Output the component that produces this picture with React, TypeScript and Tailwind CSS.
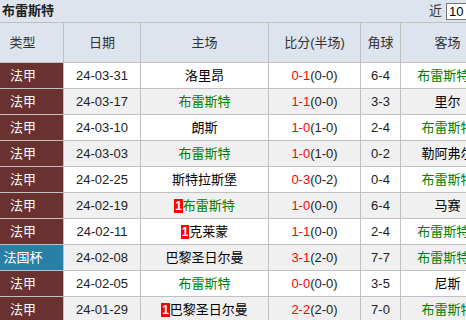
import React from 'react';

type Match = {
  league: string;
  cup?: boolean;
  date: string;
  home: string;
  homeRed?: number;
  homeOurs?: boolean;
  score: string;
  half: string;
  corner: string;
  away: string;
  awayRed?: number;
  awayOurs?: boolean;
};

const MATCHES: Match[] = [
  { league: '法甲', date: '24-03-31', home: '洛里昂', score: '0-1', half: '(0-0)', corner: '6-4', away: '布雷斯特', awayOurs: true, awayRed: 1 },
  { league: '法甲', date: '24-03-17', home: '布雷斯特', homeOurs: true, score: '1-1', half: '(0-0)', corner: '3-3', away: '里尔' },
  { league: '法甲', date: '24-03-10', home: '朗斯', score: '1-0', half: '(1-0)', corner: '2-4', away: '布雷斯特', awayOurs: true },
  { league: '法甲', date: '24-03-03', home: '布雷斯特', homeOurs: true, score: '1-0', half: '(1-0)', corner: '0-2', away: '勒阿弗尔' },
  { league: '法甲', date: '24-02-25', home: '斯特拉斯堡', score: '0-3', half: '(0-2)', corner: '0-4', away: '布雷斯特', awayOurs: true },
  { league: '法甲', date: '24-02-19', home: '布雷斯特', homeOurs: true, homeRed: 1, score: '1-0', half: '(0-0)', corner: '6-4', away: '马赛' },
  { league: '法甲', date: '24-02-11', home: '克莱蒙', homeRed: 1, score: '1-1', half: '(0-0)', corner: '2-4', away: '布雷斯特', awayOurs: true, awayRed: 1 },
  { league: '法国杯', cup: true, date: '24-02-08', home: '巴黎圣日尔曼', score: '3-1', half: '(2-0)', corner: '7-7', away: '布雷斯特', awayOurs: true, awayRed: 1 },
  { league: '法甲', date: '24-02-05', home: '布雷斯特', homeOurs: true, score: '0-0', half: '(0-0)', corner: '3-5', away: '尼斯' },
  { league: '法甲', date: '24-01-29', home: '巴黎圣日尔曼', homeRed: 1, score: '2-2', half: '(2-0)', corner: '7-0', away: '布雷斯特', awayOurs: true },
];

const RedCard = ({ n }: { n: number }) => (
  <span className="inline-block bg-[#ff0000] text-white font-bold leading-[14px] px-[1px] text-[12px]">{n}</span>
);

const Team = ({ name, ours, red, after }: { name: string; ours?: boolean; red?: number; after?: boolean }) => (
  <span className="whitespace-nowrap">
    {red && !after ? <RedCard n={red} /> : null}
    <span className={ours ? 'text-[#008000]' : 'text-black'}>{name}</span>
    {red && after ? <RedCard n={red} /> : null}
  </span>
);

export default function App() {
  return (
    <div
      className="w-[466px] h-[320px] overflow-hidden bg-white text-[13px] text-[#333]"
      style={{ fontFamily: '"Liberation Sans", "Noto Sans CJK SC", sans-serif' }}
    >
      <div className="h-[23px] bg-[#dde4ed] border-b border-[#c0c0c0] flex items-center justify-between pl-[2px]">
        <span className="font-bold text-[#222]">布雷斯特</span>
        <div className="flex items-center gap-[4px] -mr-[10px]">
          <span className="text-[#333]">近</span>
          <div className="w-[30px] h-[17px] border border-[#767676] bg-white pl-[2px] leading-[15px] text-black">10</div>
        </div>
      </div>
      <div className="w-[520px]">
        <div className="h-[40px] bg-[#dde4ed] border-b border-[#c0c0c0] flex text-[#333]">
          <div className="w-[64px] border-r border-[#c0c0c0] flex items-center justify-center pr-[18px]">类型</div>
          <div className="w-[77px] border-r border-[#c0c0c0] flex items-center justify-center">日期</div>
          <div className="w-[128px] border-r border-[#c0c0c0] flex items-center justify-center">主场</div>
          <div className="w-[92px] border-r border-[#c0c0c0] flex items-center justify-center">比分(半场)</div>
          <div className="w-[40px] border-r border-[#c0c0c0] flex items-center justify-center">角球</div>
          <div className="w-[94px] border-r border-[#c0c0c0] flex items-center justify-center">客场</div>
        </div>
        {MATCHES.map((m, i) => (
          <div
            key={m.date}
            className={`h-[26px] border-b border-[#c0c0c0] flex ${i % 2 === 1 ? 'bg-[#f0f0f0]' : 'bg-white'}`}
          >
            <div
              className={`w-[64px] border-r border-[#c0c0c0] flex items-center justify-center pr-[17px] text-white ${m.cup ? 'bg-[#2a7fa7]' : 'bg-[#6a3131]'}`}
            >
              {m.league}
            </div>
            <div className="w-[77px] border-r border-[#c0c0c0] flex items-center justify-center text-[#222]">{m.date}</div>
            <div className="w-[128px] border-r border-[#c0c0c0] flex items-center justify-center">
              <Team name={m.home} ours={m.homeOurs} red={m.homeRed} />
            </div>
            <div className="w-[92px] border-r border-[#c0c0c0] flex items-center justify-center">
              <span className="text-[#ff0000]">{m.score}</span>
              <span className="text-[#222]">{m.half}</span>
            </div>
            <div className="w-[40px] border-r border-[#c0c0c0] flex items-center justify-center text-[#222]">{m.corner}</div>
            <div className="w-[94px] border-r border-[#c0c0c0] flex items-center justify-center">
              <Team name={m.away} ours={m.awayOurs} red={m.awayRed} after />
            </div>
          </div>
        ))}
      </div>
    </div>
  );
}
